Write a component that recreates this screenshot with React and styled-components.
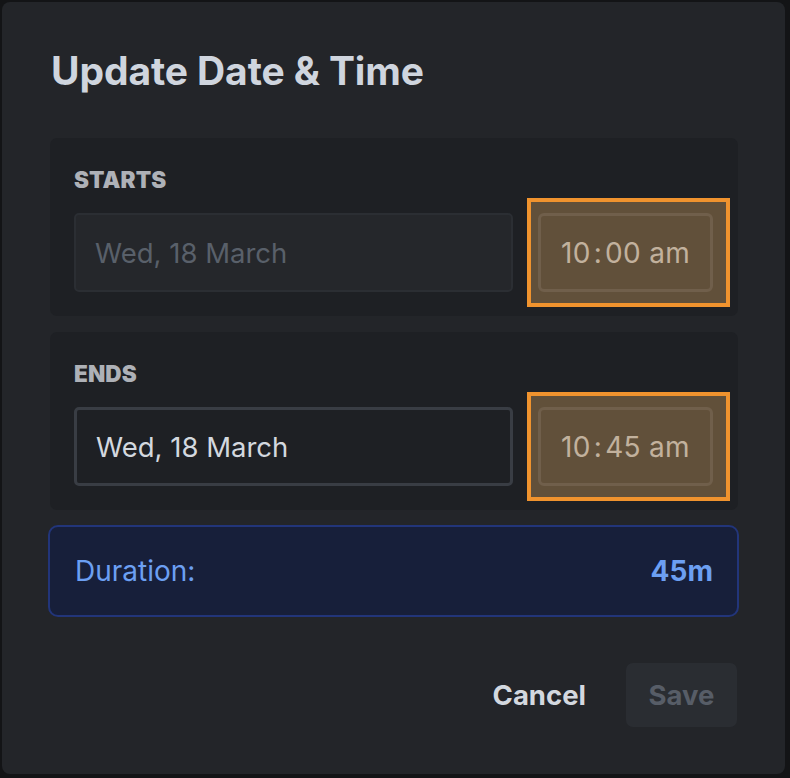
import React from "react";
import styled, { createGlobalStyle } from "styled-components";

const Global = createGlobalStyle`
  html, body { margin: 0; padding: 0; background: #131416; }
  body { font-family: Inter, "Noto Sans", "Liberation Sans", sans-serif; -webkit-font-smoothing: antialiased; }
  * { box-sizing: border-box; }
`;

const Modal = styled.div`
  margin: 2px 0 0 2px;
  width: 783px;
  height: 772px;
  background: #232529;
  border-radius: 8px;
  padding: 43px 47px 0 48px;
  display: flex;
  flex-direction: column;
`;

const Title = styled.h1`
  margin: 0 0 0 1px;
  font-size: 39px;
  line-height: 52px;
  font-weight: 700;
  color: #cfd5de;
  letter-spacing: -0.1px;
`;

const Panel = styled.section`
  margin-top: ${(p) => p.$top}px;
  background: #1e2024;
  border-radius: 7px;
  padding: 26px 25px 24px 24px;
`;

const Label = styled.div`
  font-size: 22.5px;
  font-weight: 900;
  line-height: 32px;
  color: #aeb1b7;
  letter-spacing: 0.1px;
`;

const Row = styled.div`
  margin-top: 17px;
  display: flex;
  gap: 25px;
`;

const DateField = styled.div`
  flex: 1;
  height: 79px;
  border-radius: 5px;
  display: flex;
  align-items: center;
  padding-left: 19px;
  font-size: 27.5px;
  border: ${(p) => (p.$disabled ? "2px solid #2b2e33" : "3px solid #393d44")};
  background: ${(p) => (p.$disabled ? "#25272b" : "#1e2024")};
  color: ${(p) => (p.$disabled ? "#59606a" : "#d3d8df")};
`;

const TimeWrap = styled.div`
  position: relative;
  width: 175px;
`;

const TimeField = styled.div`
  height: 79px;
  border-radius: 6px;
  border: 3px solid #393d44;
  display: flex;
  align-items: center;
  justify-content: center;
  font-size: 28px;
  color: #d3d8df;
  letter-spacing: 0.3px;
`;

const Colon = styled.span`
  margin: 0 3px;
`;

const Highlight = styled.div`
  position: absolute;
  top: -15px;
  bottom: -15px;
  left: -11px;
  right: -17px;
  border: 4px solid #f0932e;
  background: rgba(174, 133, 82, 0.47);
  pointer-events: none;
`;

const Duration = styled.div`
  margin: 15px -1px 0 -2px;
  height: 92px;
  border: 2px solid #22357a;
  background: #171f3a;
  border-radius: 10px;
  display: flex;
  align-items: center;
  justify-content: space-between;
  padding: 0 24px 0 25px;
  font-size: 28px;
  color: #6c9ff2;
`;

const DurationValue = styled.span`
  font-weight: 700;
`;

const Footer = styled.div`
  margin-top: 46px;
  display: flex;
  justify-content: flex-end;
  align-items: center;
  gap: 40px;
  padding-right: 1px;
`;

const Button = styled.button`
  font-family: inherit;
  font-size: 27.5px;
  font-weight: 700;
  border: none;
  border-radius: 7px;
  height: 64px;
  cursor: pointer;
  background: ${(p) => (p.$primary ? "#2a2d32" : "transparent")};
  color: ${(p) => (p.$primary ? "#575d67" : "#d3d8df")};
  padding: 0;
  width: ${(p) => (p.$primary ? "111px" : "auto")};
`;

function Time({ h, m }) {
  return (
    <TimeWrap>
      <TimeField>
        {h}
        <Colon>:</Colon>
        {m} am
      </TimeField>
      <Highlight />
    </TimeWrap>
  );
}

export default function App() {
  return (
    <>
      <Global />
      <Modal>
        <Title>Update Date &amp; Time</Title>
        <Panel $top={41}>
          <Label>STARTS</Label>
          <Row>
            <DateField $disabled>Wed, 18 March</DateField>
            <Time h="10" m="00" />
          </Row>
        </Panel>
        <Panel $top={16}>
          <Label>ENDS</Label>
          <Row>
            <DateField>Wed, 18 March</DateField>
            <Time h="10" m="45" />
          </Row>
        </Panel>
        <Duration>
          <span>Duration:</span>
          <DurationValue>45m</DurationValue>
        </Duration>
        <Footer>
          <Button>Cancel</Button>
          <Button $primary>Save</Button>
        </Footer>
      </Modal>
    </>
  );
}
